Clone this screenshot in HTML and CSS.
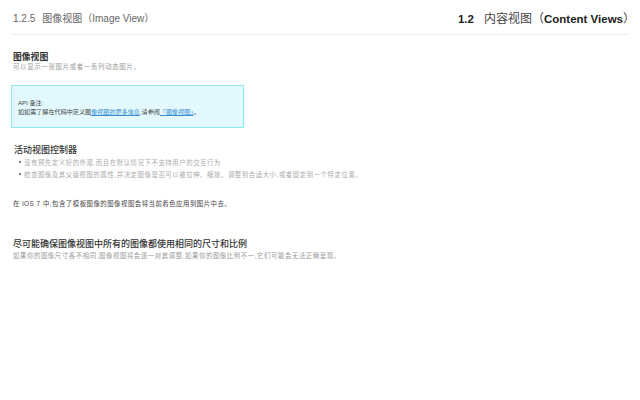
FILE: index.html
```html
<!DOCTYPE html>
<html lang="zh">
<head>
<meta charset="utf-8">
<title>图像视图</title>
<link rel="stylesheet" href="styles.css">
</head>
<body>
<header class="top">
  <div class="top-left">1.2.5<span class="sp"></span>图像视图（Image View）</div>
  <div class="top-right"><b>1.2</b><span class="sp2"></span>内容视图（<b>Content Views</b>）</div>
</header>
<section class="intro">
  <h2 class="h h-strong">图像视图</h2>
  <p class="gray">可以显示一张图片或者一系列动态图片。</p>
</section>
<aside class="note">
  <p>API 备注:</p>
  <p>如如需了解在代码中定义图<a href="#">像视图的更多信息</a>,请参阅<a href="#">「图像视图」</a>。</p>
</aside>
<section class="ctrl">
  <h2 class="h">活动视图控制器</h2>
  <ul class="list">
    <li>没有预先定义好的外观,而且在默认情况下不支持用户的交互行为</li>
    <li>检查图像及其父级视图的属性,并决定图像是否可以被拉伸、缩放、调整到合适大小,或者固定到一个特定位置。</li>
  </ul>
</section>
<p class="ios">在 iOS 7 中,包含了模板图像的图像视图会将当前着色应用到图片中去。</p>
<section class="last">
  <h2 class="h">尽可能确保图像视图中所有的图像都使用相同的尺寸和比例</h2>
  <p class="gray gray-tight">如果你的图像尺寸各不相同,图像视图将会逐一对其调整,如果你的图像比例不一,它们可能会无法正确呈现。</p>
</section>
</body>
</html>
```

FILE: styles.css
```css
html, body { margin: 0; padding: 0; background: #fff; }
body {
  width: 640px;
  height: 400px;
  overflow: hidden;
  font-family: "Liberation Sans", "Noto Sans CJK SC", sans-serif;
  color: #333;
}
p, h2, ul { margin: 0; padding: 0; }
.top {
  display: flex;
  justify-content: space-between;
  align-items: center;
  margin: 0 12px;
  height: 34px;
  border-bottom: 1px solid #eee;
  padding-left: 1px;
}
.top-left { font-size: 10px; color: #666; }
.top-right { font-size: 12px; color: #444; margin-right: -7px; }
.top-right b { font-size: 11.5px; color: #222; }
.sp { display: inline-block; width: 7px; }
.sp2 { display: inline-block; width: 10px; }
.h { font-size: 9px; line-height: 11px; font-weight: 500; color: #333; }
.h-strong { font-size: 8.8px; font-weight: 700; }
.gray { font-size: 6.4px; line-height: 8px; color: #999; letter-spacing: .7px; }
.gray-tight { margin-top: 2px; letter-spacing: .58px; }
.intro { margin: 17px 0 0 13px; }
.note {
  box-sizing: border-box;
  width: 233px;
  height: 43px;
  margin: 14px 0 0 11px;
  padding: 12px 6px 0;
  background: #e3f9fd;
  border: 1px solid #8fe6ee;
  font-size: 6.1px;
  line-height: 9px;
  color: #444;
}
.note a { color: #3a8fd0; text-decoration: underline; }
.ctrl { margin: 17px 0 0 14px; }
.list { list-style: none; margin-top: 1px; }
.list li {
  position: relative;
  padding-left: 10px;
  font-size: 6.4px;
  line-height: 12px;
  color: #aaa;
  letter-spacing: .56px;
}
.list li::before {
  content: "";
  position: absolute;
  left: 5px;
  top: 4px;
  width: 2px;
  height: 2px;
  border-radius: 50%;
  background: #555;
}
.ios { margin: 19px 0 0 13px; font-size: 6.4px; line-height: 8px; color: #444; letter-spacing: .5px; }
.last { margin: 31px 0 0 13px; }
```
